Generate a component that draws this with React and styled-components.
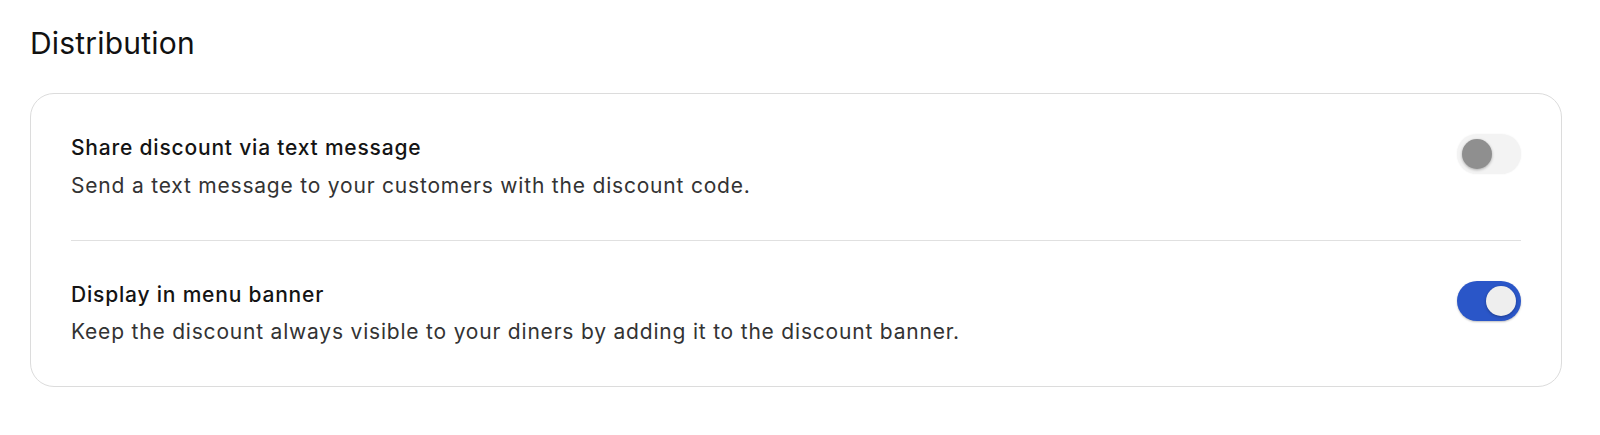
import React, { useState } from "react";
import styled, { createGlobalStyle } from "styled-components";

const Global = createGlobalStyle`
  html, body { margin: 0; padding: 0; background: #ffffff; }
  body { font-family: Inter, "Noto Sans", sans-serif; -webkit-font-smoothing: antialiased; }
`;

const Page = styled.div`
  padding: 25px 38px 40px 30px;
`;

const Title = styled.h2`
  margin: 0 0 32px 0;
  font-size: 30px;
  line-height: 36px;
  font-weight: 400;
  color: #111111;
  letter-spacing: 0.2px;
`;

const Card = styled.div`
  border: 1px solid #dcdcdc;
  border-radius: 24px;
  padding: 0 40px;
  background: #ffffff;
`;

const Row = styled.div`
  display: flex;
  align-items: flex-start;
  justify-content: space-between;
  padding: 40px 0 40px;
  & + & {
    border-top: 1px solid #e0e0e0;
  }
`;

const Texts = styled.div`
  display: flex;
  flex-direction: column;
  gap: 9.5px;
`;

const Heading = styled.div`
  font-size: 21px;
  line-height: 28px;
  font-weight: 500;
  color: #141414;
  letter-spacing: 0.8px;
`;

const Desc = styled.div`
  font-size: 21px;
  line-height: 28px;
  font-weight: 400;
  color: #333333;
  letter-spacing: 0.8px;
`;

const Track = styled.button`
  position: relative;
  flex: none;
  width: 64px;
  height: 40px;
  border: none;
  padding: 0;
  border-radius: 20px;
  cursor: pointer;
  background: ${(p) => (p.$on ? "#2a56c8" : "#f3f3f3")};
  box-shadow: ${(p) =>
    p.$on ? "0 1px 2px rgba(0,0,0,0.25)" : "0 0 2px rgba(0,0,0,0.06)"};
`;

const Thumb = styled.span`
  position: absolute;
  top: 5px;
  left: ${(p) => (p.$on ? "29px" : "5px")};
  width: 30px;
  height: 30px;
  border-radius: 50%;
  background: ${(p) => (p.$on ? "#eeeeee" : "#8f8f8f")};
  box-shadow: 0 1px 3px rgba(0, 0, 0, 0.3);
`;

function Toggle({ on, onChange }) {
  return (
    <Track $on={on} onClick={() => onChange(!on)} aria-pressed={on}>
      <Thumb $on={on} />
    </Track>
  );
}

export default function App() {
  const [sms, setSms] = useState(false);
  const [banner, setBanner] = useState(true);
  return (
    <Page>
      <Global />
      <Title>Distribution</Title>
      <Card>
        <Row>
          <Texts>
            <Heading>Share discount via text message</Heading>
            <Desc>Send a text message to your customers with the discount code.</Desc>
          </Texts>
          <Toggle on={sms} onChange={setSms} />
        </Row>
        <Row>
          <Texts>
            <Heading>Display in menu banner</Heading>
            <Desc>
              Keep the discount always visible to your diners by adding it to the discount banner.
            </Desc>
          </Texts>
          <Toggle on={banner} onChange={setBanner} />
        </Row>
      </Card>
    </Page>
  );
}
